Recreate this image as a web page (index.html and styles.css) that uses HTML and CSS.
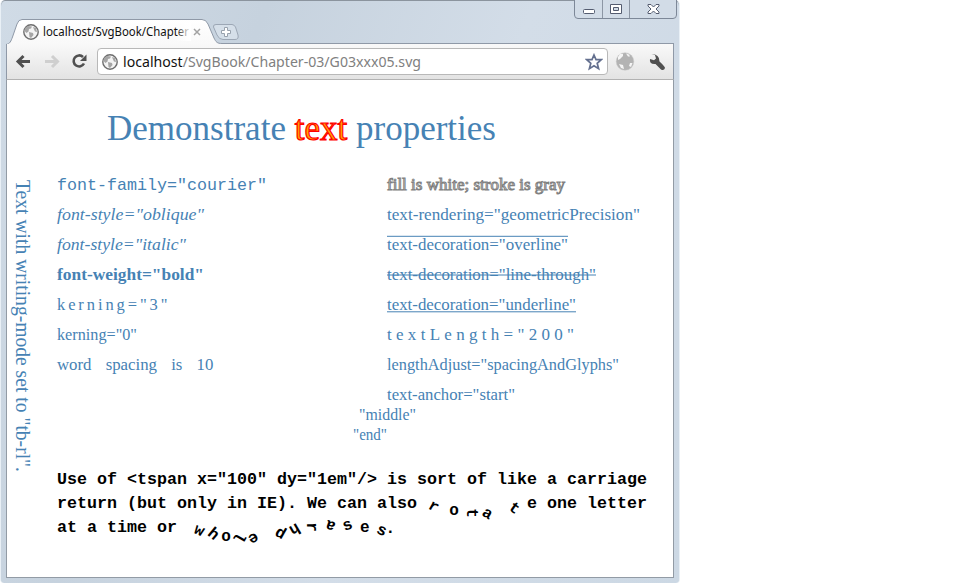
FILE: index.html
```html
<!DOCTYPE html>
<html lang="en">
<head>
<meta charset="utf-8">
<title>localhost/SvgBook/Chapter-03/G03xxx05.svg</title>
<link rel="stylesheet" href="styles.css">
</head>
<body>
<div class="window">
  <header class="titlebar">
    <svg class="tabs" width="250" height="28" viewBox="0 0 250 28">
      <defs>
        <linearGradient id="tabfill" x1="0" y1="0" x2="0" y2="1"><stop offset="0" stop-color="#fff"/><stop offset="1" stop-color="#f8f8f8"/></linearGradient>
        <linearGradient id="fade" x1="0" x2="1"><stop offset="0" stop-color="#fff" stop-opacity="0"/><stop offset="1" stop-color="#fff"/></linearGradient>
      </defs>
      <path d="M0 25.500C4 25 5 22 6.500 18L11 5Q12.500 .5 16 .5H196Q200 .5 202 5L208 19C210 23 211 24.500 216 24.500H250V28H0Z" fill="url(#tabfill)"/>
      <path d="M0 25.500C4 25 5 22 6.500 18L11 5Q12.500 .5 16 .5H196Q200 .5 202 5L208 19C210 23 211 24.500 216 24.500H250" fill="none" stroke="#8f99a7"/>
      <path d="M210 5.500H226Q228 5.500 229.500 8L232 16Q233 20.500 229 20.500H217Q213 20.500 211 16L207.500 8Q207 5.500 210 5.500Z" fill="#d5dfe9" stroke="#9ca7b5"/>
      <path d="M218.500 8.500h3v3h3v3h-3v3h-3v-3h-3v-3h3z" fill="#fff" stroke="#98a2ae"/>
      <use href="#globe" x="17" y="5" width="16" height="16"/>
      <text class="tab-title" x="37" y="17" textLength="146" lengthAdjust="spacingAndGlyphs">localhost/SvgBook/Chapter</text>
      <rect x="170" y="4" width="15" height="18" fill="url(#fade)"/>
      <path d="M188 10l6 6m0-6l-6 6" stroke="#a2a2a2" stroke-width="1.500"/>
    </svg>
    <svg class="controls" width="104" height="20" viewBox="0 0 104 20">
      <path d="M.5 0V15Q.5 18.500 4 18.500H99Q102.500 18.500 102.500 15V0" fill="#d2dce7" stroke="#7d8898"/>
      <path d="M28.500 0V18M55.500 0V18" stroke="#8c96a4"/>
      <rect x="9.500" y="9.500" width="11" height="4" rx="1" fill="#fff" stroke="#545c70"/>
      <path d="M36.500 4.500h11v9h-11zM39.500 7.500h5v3h-5z" fill="#fff" fill-rule="evenodd" stroke="#545c70"/>
      <path d="M74 4.500h3l2.500 2.500 2.500-2.500h3v1.500L82 9l3 3v1.500h-3L79.500 11 77 13.500h-3V12l3-3-3-3z" fill="#fff" stroke="#545c70"/>
    </svg>
  </header>
  <div class="toolbar">
    <svg class="nav" width="80" height="30" viewBox="0 0 80 30">
      <path d="M23 15.500H11M16.500 10L11 15.500l5.500 5.500" fill="none" stroke="#505050" stroke-width="3"/>
      <path d="M38 15.500H50M45 10L50.500 15.500 45 21" fill="none" stroke="#cfcfcf" stroke-width="3"/>
      <path d="M77 17.500A5.500 5.500 0 1 1 76 11" fill="none" stroke="#505050" stroke-width="2.600"/>
      <path d="M79.500 8.500V15H73z" fill="#505050"/>
    </svg>
    <div class="omnibox">
      <svg width="16" height="16"><use href="#globe" width="16" height="16"/></svg>
      <svg class="url" width="310" height="24"><text x="0" y="17" textLength="298" lengthAdjust="spacingAndGlyphs"><tspan class="host">localhost</tspan>/SvgBook/Chapter-03/G03xxx05.svg</text></svg>
      <svg class="star" width="18" height="18" viewBox="0 0 18 18"><path d="M9 2l2 4.700h5.200l-4 3.600 1.400 5.400L9 12.700l-4.600 3 1.400-5.400-4-3.600H7z" fill="#fff" stroke="#64708f" stroke-width="1.700"/></svg>
    </div>
    <svg class="tools" width="52" height="22" viewBox="0 0 52 22">
      <circle cx="11" cy="10.500" r="8.800" fill="#b3b3b3" stroke="#c8c8c8" stroke-width=".5"/><path d="M4 6l2-3 3 0 0 2-3 3-2 1zM12 2.500l3 1 1 2-2 0zM5 13l4 1 1 4-3-1zM16 12l2.500 0-1.500 4-2-1z" fill="#f5f5f5"/>
      <path d="M37.500 3l3.500 1 1 3.500-2 1.800L36 8Q35 13.500 41.500 13l5.500 5.500Q50 20 51 17 51 15.500 45.500 10.500 45.500 3 37.500 3z" fill="#505050"/>
    </svg>
  </div>
  <main class="page">
    <svg class="doc" width="666" height="497" viewBox="7 80 666 497">
      <text class="heading" x="107" y="140" textLength="389" lengthAdjust="spacingAndGlyphs">Demonstrate <tspan class="hot">text</tspan> properties</text>
      <text class="vertical" transform="translate(16 180) rotate(90)" textLength="292" lengthAdjust="spacingAndGlyphs">Text with writing-mode set to "tb-rl".</text>
      <g class="sample">
        <text class="courier" x="57" y="190" textLength="210" lengthAdjust="spacingAndGlyphs">font-family="courier"</text>
        <text class="italic" x="57" y="220" textLength="147" lengthAdjust="spacingAndGlyphs">font-style="oblique"</text>
        <text class="italic" x="57" y="250" textLength="129" lengthAdjust="spacingAndGlyphs">font-style="italic"</text>
        <text class="bold" x="57" y="280" textLength="147" lengthAdjust="spacingAndGlyphs">font-weight="bold"</text>
        <text class="kerned" x="57" y="310">kerning="3"</text>
        <text x="57" y="340" textLength="80" lengthAdjust="spacingAndGlyphs">kerning="0"</text>
        <text class="spaced" x="57" y="370">word spacing is 10</text>
        <text class="outlined" x="387" y="190" textLength="178" lengthAdjust="spacingAndGlyphs">fill is white; stroke is gray</text>
        <text x="387" y="220" textLength="253" lengthAdjust="spacingAndGlyphs">text-rendering="geometricPrecision"</text>
        <text x="387" y="250" textLength="181" lengthAdjust="spacingAndGlyphs">text-decoration="overline"</text>
        <text x="387" y="280" textLength="209" lengthAdjust="spacingAndGlyphs">text-decoration="line-through"</text>
        <text x="387" y="310" textLength="189" lengthAdjust="spacingAndGlyphs">text-decoration="underline"</text>
        <text x="387" y="340" textLength="187">textLength="200"</text>
        <text x="387" y="370" textLength="232" lengthAdjust="spacingAndGlyphs">lengthAdjust="spacingAndGlyphs"</text>
        <text x="387" y="400" textLength="128" lengthAdjust="spacingAndGlyphs">text-anchor="start"</text>
        <text x="387.500" y="420" text-anchor="middle" textLength="57" lengthAdjust="spacingAndGlyphs">"middle"</text>
        <text x="387" y="440" text-anchor="end" textLength="34" lengthAdjust="spacingAndGlyphs">"end"</text>
      </g>
      <path class="rule" d="M387 236.300H568M387 275H596M387 311.800H576"/>
      <g class="mono">
        <text x="57" y="484" textLength="590" lengthAdjust="spacingAndGlyphs">Use of &lt;tspan x="100" dy="1em"/&gt; is sort of like a carriage</text>
        <text x="57" y="508" textLength="360" lengthAdjust="spacingAndGlyphs">return (but only in IE). We can also</text>
        <text class="turned" x="427.300 449.200 467 481 507.700" y="508.100 514.500 508.200 515 509.300" rotate="30 0 90 30 35">rotat</text>
        <text x="527" y="508" textLength="120" lengthAdjust="spacingAndGlyphs">e one letter</text>
        <text x="57" y="532" textLength="120" lengthAdjust="spacingAndGlyphs">at a time or</text>
        <text class="turned" x="193 206.800 221.200 237.600 255.200" y="532.600 534.600 541 530.600 532.100" rotate="25 40 0 120 150">whole</text>
        <text class="turned" x="286.400 296.400 307 336.400 344.400 360 375.500 385.500" y="532.200 522.800 522.200 522.900 530.900 531.500 532.600 532.500" rotate="210 150 90 200 -20 0 25 0">phrases.</text>
      </g>
    </svg>
  </main>
</div>
<svg class="symbols" width="0" height="0">
  <symbol id="globe" viewBox="0 0 16 16"><circle cx="8" cy="8" r="7.200" fill="#f3f3f3" stroke="#6e6e6e" stroke-width="1.400"/><path d="M2 4l3-2 4 .5-1 2-2 .5-.5 2.500L3.500 9 1.500 7zM6 8l4 1 .5 2L8 14 6.500 13zM10 3l3 1 1 4-2-.5-1-2z" fill="#a5a5a5"/></symbol>
</svg>
</body>
</html>
```
FILE: styles.css
```css
* { box-sizing: border-box; }
body { margin: 0; background: #fff; overflow: hidden; }
svg { display: block; flex: none; }
.symbols { position: absolute; }

.window {
  width: 680px;
  height: 583px;
  padding: 0 6px 5px;
  display: flex;
  flex-direction: column;
  border-left: 1px solid #e9f0f6;
  border-right: 1px solid #e9f0f6;
  border-radius: 5px 5px 4px 4px;
  background: linear-gradient(110deg, #d0dbe6, #c6d2de 30%, #d3dde8 60%, #ccd8e4);
  box-shadow: inset 0 1px #8b949e;
}
.titlebar {
  height: 44px;
  flex: none;
  display: flex;
  justify-content: space-between;
  align-items: flex-start;
  margin: 0 -1px;
  background: linear-gradient(#8f99a7, #8f99a7) 240px 43px / 428px 1px no-repeat;
}
.tabs { margin-top: 19px; }
.controls { margin-right: -4px; }
.tab-title { font: 12px "Noto Sans", sans-serif; fill: #111; }

.toolbar {
  height: 36px;
  flex: none;
  display: flex;
  align-items: center;
  margin: 0 -1px;
  border: solid #8f99a7;
  border-width: 0 1px;
  border-bottom: 1px solid #b2b2b2;
  background: linear-gradient(#f9f9f9, #e3e3e3);
}
.nav { margin-top: -1px; }
.omnibox {
  width: 511px;
  height: 27px;
  margin-left: 10px;
  padding: 0 4px;
  display: flex;
  align-items: center;
  border: 1px solid #b8b8b8;
  border-radius: 4px;
  background: #fff;
}
.url { margin-left: 5px; font: 15px "Noto Sans", sans-serif; fill: #808080; overflow: visible; }
.host { fill: #111; }
.star { margin-left: auto; }
.tools { margin-left: 6px; }

.page {
  flex: 1;
  min-height: 0;
  margin: 0 -1px;
  border: solid #929ba5;
  border-width: 0 1px 1px;
  background: #fff;
  overflow: hidden;
}
.heading { font: 36px "Liberation Serif", serif; fill: steelblue; }
.hot { fill: orange; stroke: red; stroke-width: 1.200px; }
.vertical { font: 20px "Liberation Serif", serif; fill: steelblue; }
.sample { font: 17px "Liberation Serif", serif; fill: steelblue; }
.courier { font-family: "Liberation Mono", monospace; }
.italic { font-style: italic; }
.bold { font-weight: bold; }
.kerned { font-size: 16.500px; letter-spacing: 2.900px; }
.spaced { font-size: 16.800px; word-spacing: 10px; }
.outlined { fill: #fff; stroke: gray; stroke-width: 1px; }
.rule { stroke: steelblue; stroke-width: 1; }
.mono { font: bold 16.670px "Liberation Mono", monospace; fill: #000; }
.turned { font-size: 16px; }
```
